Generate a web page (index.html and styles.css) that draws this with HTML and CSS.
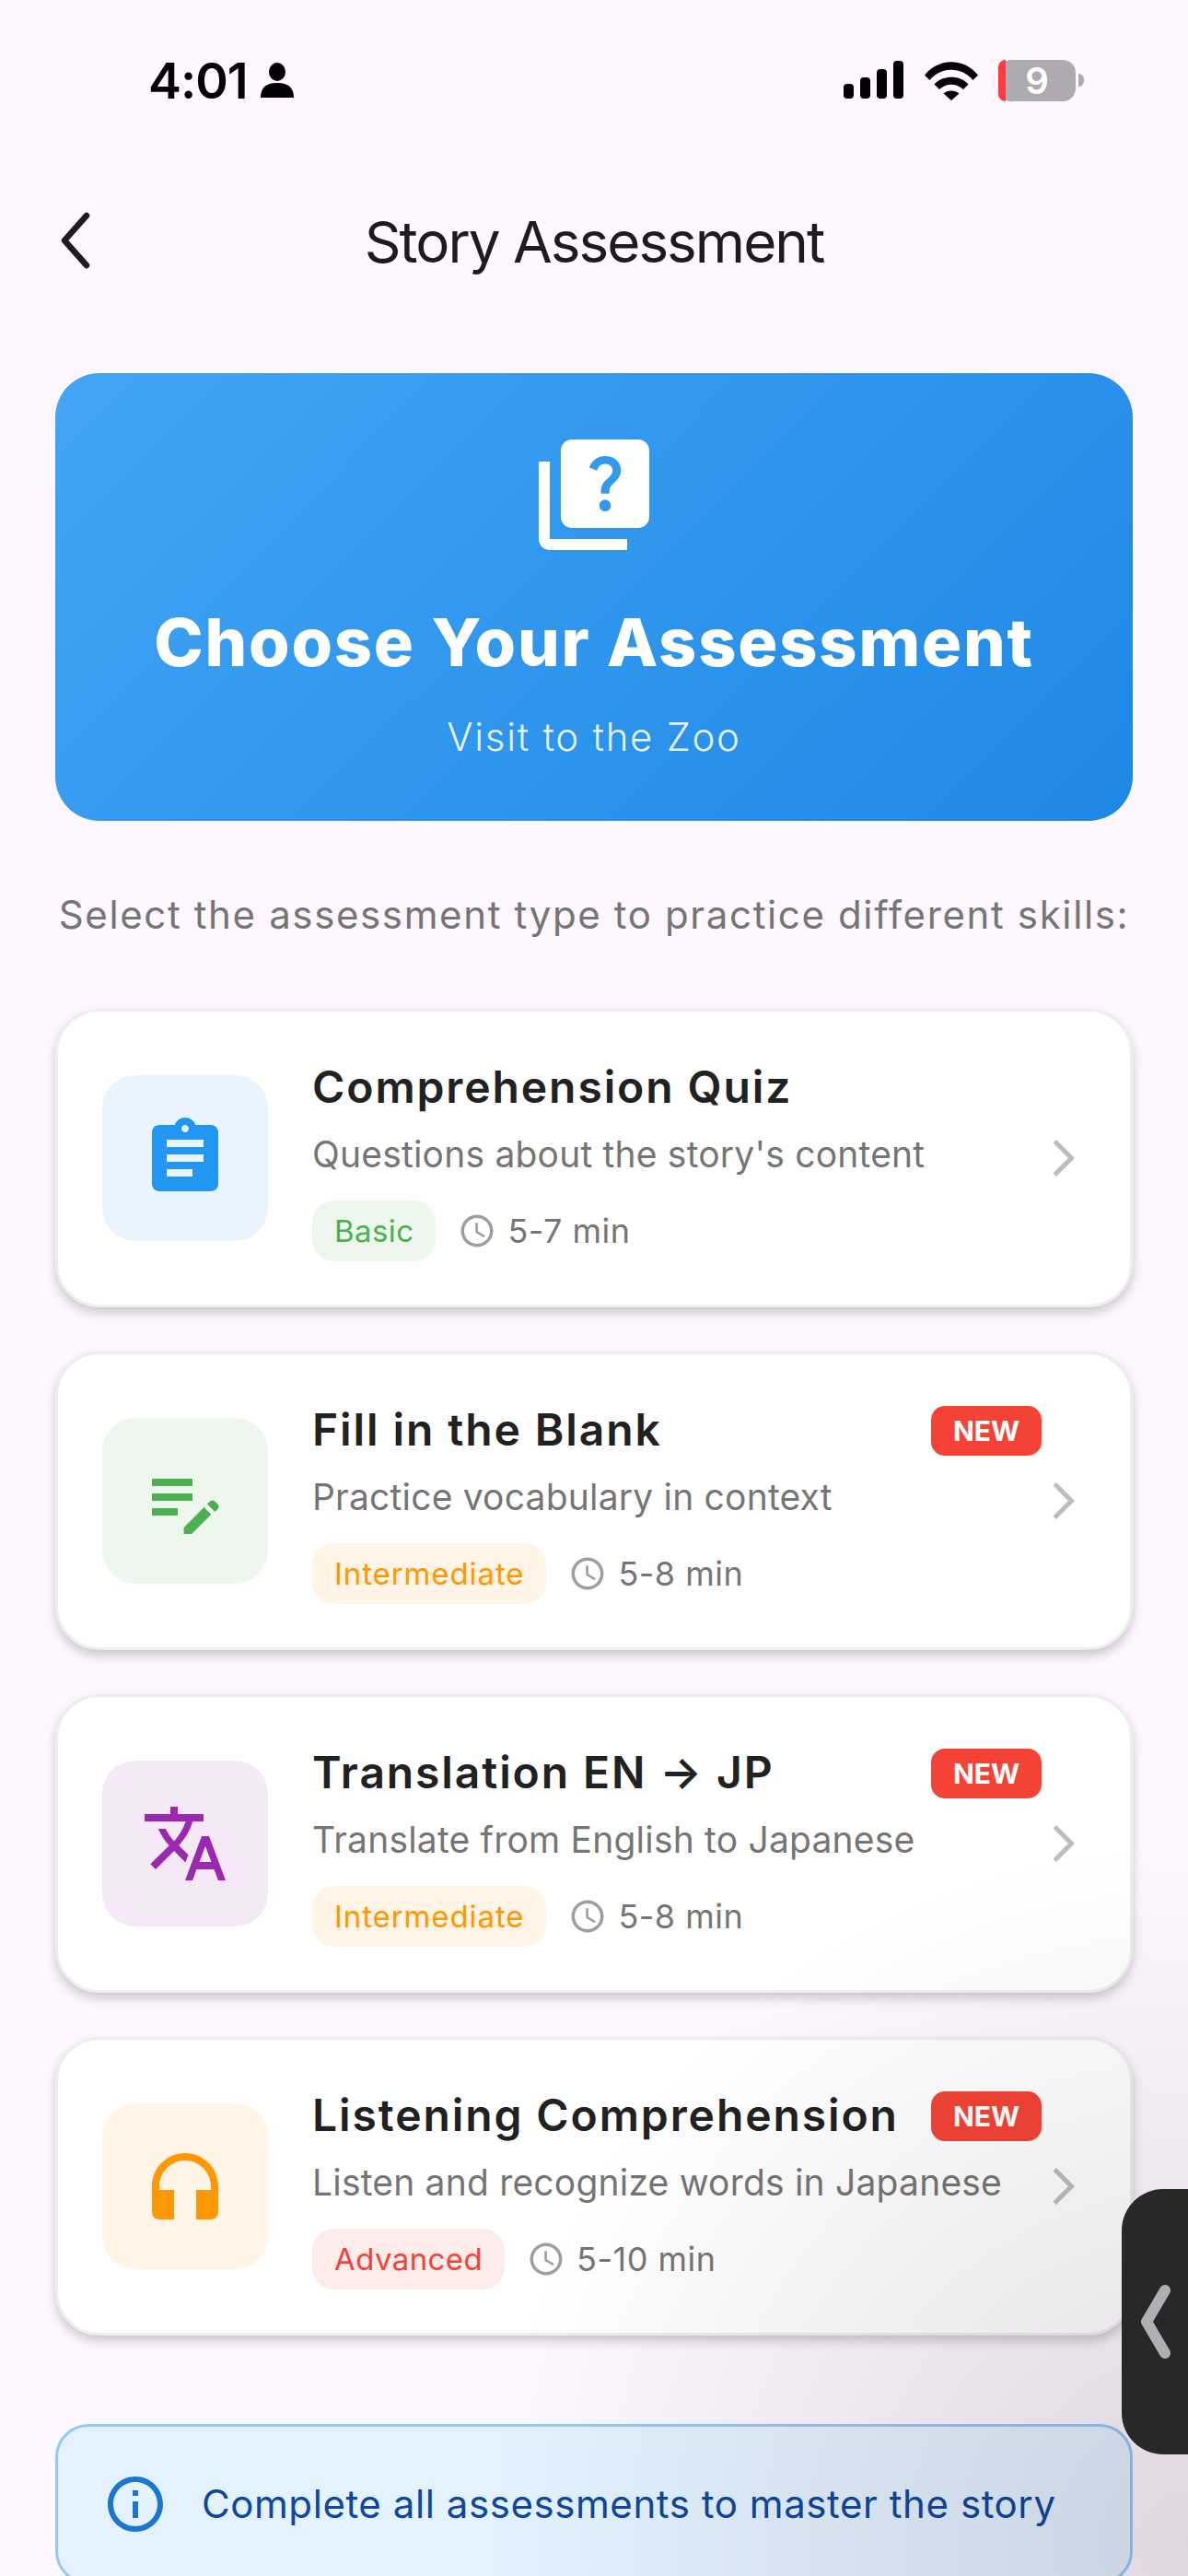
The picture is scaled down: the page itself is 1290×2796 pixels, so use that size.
FILE: index.html
```html
<!DOCTYPE html>
<html lang="en">
<head>
  <meta charset="UTF-8">
  <title>Story Assessment</title>
  <link rel="stylesheet" href="styles.css">
</head>
<body>

  <div class="status-bar">
    <span class="time">4:01</span>
    <svg class="person" width="36" height="38" viewBox="0 0 36 38">
      <ellipse cx="18" cy="10" rx="9" ry="10" fill="#000"/>
      <path d="M0 38c0-12 7-16 18-16s18 4 18 16z" fill="#000"/>
    </svg>
    <svg class="signal" width="66" height="42" viewBox="0 0 66 42">
      <rect x="0" y="25" width="11" height="16" rx="4"/>
      <rect x="18" y="18" width="11" height="23" rx="4"/>
      <rect x="36" y="9" width="11" height="32" rx="4"/>
      <rect x="54" y="0" width="11" height="41" rx="4"/>
    </svg>
    <svg class="wifi" width="58" height="43" viewBox="0 0 58 43">
      <path d="M0 15.500C15.500 -3.500 42.500 -3.500 58 15.500L52.500 21C40 6 18 6 5.500 21z"/>
      <path d="M10.500 25.500C19 15 39 15 47.500 25.500L42 31C34 24 24 24 16 31z"/>
      <path d="M20.500 35.500C25 31.500 33 31.500 37.500 35.500L29 43z"/>
    </svg>
    <div class="battery">
      <div class="battery-body">
        <div class="battery-low"></div>
        <span class="battery-num">9</span>
      </div>
      <div class="battery-nub"></div>
    </div>
  </div>

  <div class="top-nav">
    <svg class="back" width="40" height="66" viewBox="0 0 40 66">
      <path d="M31 5 7 32l24 27" fill="none" stroke="#1d1b20" stroke-width="6.500" stroke-linecap="round" stroke-linejoin="round"/>
    </svg>
    <h1 class="nav-title">Story Assessment</h1>
  </div>

  <div class="content">
    <div class="hero">
      <svg class="hero-icon" width="144" height="144" viewBox="0 0 24 24">
        <path fill="#fff" d="M4,6H2v14c0,1.1,0.9,2,2,2h14v-2H4V6z M20,2H8C6.9,2,6,2.9,6,4v12c0,1.1,0.9,2,2,2h12c1.1,0,2-0.9,2-2V4C22,2.9,21.1,2,20,2z M14.01,15c-0.59,0-1.05-0.47-1.05-1.05c0-0.59,0.47-1.04,1.05-1.04c0.59,0,1.04,0.45,1.04,1.04C15.04,14.53,14.6,15,14.01,15z M16.51,8.83c-0.63,0.93-1.23,1.21-1.55,1.8c-0.13,0.24-0.18,0.39-0.18,1.16h-1.52c0-0.41-0.06-1.07,0.26-1.64c0.41-0.73,1.18-1.16,1.63-1.8c0.48-0.68,0.21-1.94-1.14-1.94c-0.88,0-1.32,0.67-1.5,1.23l-1.37-0.57C11.51,5.96,12.52,5,13.99,5c1.23,0,2.08,0.56,2.51,1.26C16.87,6.87,17.08,7.99,16.51,8.83z"/>
      </svg>
      <h2 class="hero-title">Choose Your Assessment</h2>
      <p class="hero-sub">Visit to the Zoo</p>
    </div>

    <p class="lead">Select the assessment type to practice different skills:</p>

    <div class="cards">

      <div class="card">
        <div class="tile tile-blue">
          <svg width="96" height="96" viewBox="0 0 24 24"><path fill="#2196f3" d="M19 3h-4.180C14.400 1.840 13.300 1 12 1c-1.300 0-2.400.84-2.820 2H5c-1.100 0-2 .9-2 2v14c0 1.100.9 2 2 2h14c1.100 0 2-.9 2-2V5c0-1.100-.9-2-2-2zm-7 0c.55 0 1 .45 1 1s-.45 1-1 1-1-.45-1-1 .45-1 1-1zm2 14H7v-2h7v2zm3-4H7v-2h10v2zm0-4H7V7h10v2z"/></svg>
        </div>
        <div class="card-body">
          <div class="card-head">
            <h3 class="card-title">Comprehension Quiz</h3>
          </div>
          <p class="card-desc">Questions about the story's content</p>
          <div class="card-meta">
            <span class="chip chip-basic">Basic</span>
            <svg class="clock" width="42" height="42" viewBox="0 0 24 24"><path d="M11.990 2C6.470 2 2 6.480 2 12s4.470 10 9.990 10C17.520 22 22 17.520 22 12S17.520 2 11.990 2zM12 20c-4.420 0-8-3.580-8-8s3.580-8 8-8 8 3.580 8 8-3.580 8-8 8zm.5-13H11v6l5.250 3.150.75-1.230-4.500-2.670z"/></svg>
            <span class="duration">5-7 min</span>
          </div>
        </div>
        <svg class="chevron" width="48" height="48" viewBox="0 0 24 24"><path d="M6.230 20.230 8 22l10-10L8 2 6.230 3.770 14.460 12z"/></svg>
      </div>

      <div class="card">
        <div class="tile tile-green">
          <svg width="96" height="96" viewBox="0 0 24 24"><path fill="#4caf50" d="M3 10h11v2H3v-2zm0-2h11V6H3v2zm0 8h7v-2H3v2zm15.010-3.130.71-.71c.39-.39 1.020-.39 1.410 0l.71.71c.39.39.39 1.020 0 1.410l-.71.71-2.120-2.120zm-1.060 1.060-5.300 5.300V21h2.120l5.300-5.300-2.120-2.120z"/></svg>
        </div>
        <div class="card-body">
          <div class="card-head">
            <h3 class="card-title">Fill in the Blank</h3>
            <span class="new-badge">NEW</span>
          </div>
          <p class="card-desc">Practice vocabulary in context</p>
          <div class="card-meta">
            <span class="chip chip-mid">Intermediate</span>
            <svg class="clock" width="42" height="42" viewBox="0 0 24 24"><path d="M11.990 2C6.470 2 2 6.480 2 12s4.470 10 9.990 10C17.520 22 22 17.520 22 12S17.520 2 11.990 2zM12 20c-4.420 0-8-3.580-8-8s3.580-8 8-8 8 3.580 8 8-3.580 8-8 8zm.5-13H11v6l5.250 3.150.75-1.230-4.500-2.670z"/></svg>
            <span class="duration">5-8 min</span>
          </div>
        </div>
        <svg class="chevron" width="48" height="48" viewBox="0 0 24 24"><path d="M6.230 20.230 8 22l10-10L8 2 6.230 3.770 14.460 12z"/></svg>
      </div>

      <div class="card">
        <div class="tile tile-purple">
          <svg width="96" height="96" viewBox="0 0 24 24"><path fill="#9c27b0" d="M12.870 15.070l-2.540-2.510.03-.03c1.740-1.940 2.980-4.170 3.710-6.530H17V4h-7V2H8v2H1v1.990h11.170C11.500 7.920 10.440 9.750 9 11.350 8.070 10.320 7.300 9.190 6.690 8h-2c.73 1.630 1.730 3.170 2.980 4.560l-5.090 5.020L4 19l5-5 3.110 3.110.76-2.040zM18.500 10h-2L12 22h2l1.120-3h4.750L21 22h2l-4.500-12zm-2.620 7l1.620-4.330L19.120 17h-3.240z"/></svg>
        </div>
        <div class="card-body">
          <div class="card-head">
            <h3 class="card-title">Translation EN → JP</h3>
            <span class="new-badge">NEW</span>
          </div>
          <p class="card-desc">Translate from English to Japanese</p>
          <div class="card-meta">
            <span class="chip chip-mid">Intermediate</span>
            <svg class="clock" width="42" height="42" viewBox="0 0 24 24"><path d="M11.990 2C6.470 2 2 6.480 2 12s4.470 10 9.990 10C17.520 22 22 17.520 22 12S17.520 2 11.990 2zM12 20c-4.420 0-8-3.580-8-8s3.580-8 8-8 8 3.580 8 8-3.580 8-8 8zm.5-13H11v6l5.250 3.150.75-1.230-4.500-2.670z"/></svg>
            <span class="duration">5-8 min</span>
          </div>
        </div>
        <svg class="chevron" width="48" height="48" viewBox="0 0 24 24"><path d="M6.230 20.230 8 22l10-10L8 2 6.230 3.770 14.460 12z"/></svg>
      </div>

      <div class="card">
        <div class="tile tile-orange">
          <svg width="96" height="96" viewBox="0 0 24 24"><path fill="#ff9800" d="M12 3c-4.970 0-9 4.030-9 9v7c0 1.100.9 2 2 2h4v-8H5v-1c0-3.870 3.130-7 7-7s7 3.130 7 7v1h-4v8h4c1.100 0 2-.9 2-2v-7c0-4.970-4.030-9-9-9z"/></svg>
        </div>
        <div class="card-body">
          <div class="card-head">
            <h3 class="card-title">Listening Comprehension</h3>
            <span class="new-badge">NEW</span>
          </div>
          <p class="card-desc">Listen and recognize words in Japanese</p>
          <div class="card-meta">
            <span class="chip chip-hard">Advanced</span>
            <svg class="clock" width="42" height="42" viewBox="0 0 24 24"><path d="M11.990 2C6.470 2 2 6.480 2 12s4.470 10 9.990 10C17.520 22 22 17.520 22 12S17.520 2 11.990 2zM12 20c-4.420 0-8-3.580-8-8s3.580-8 8-8 8 3.580 8 8-3.580 8-8 8zm.5-13H11v6l5.250 3.150.75-1.230-4.500-2.670z"/></svg>
            <span class="duration">5-10 min</span>
          </div>
        </div>
        <svg class="chevron" width="48" height="48" viewBox="0 0 24 24"><path d="M6.230 20.230 8 22l10-10L8 2 6.230 3.770 14.460 12z"/></svg>
      </div>

    </div>

    <div class="info-box">
      <svg width="72" height="72" viewBox="0 0 24 24"><path fill="#1976d2" d="M11 7h2v2h-2zm0 4h2v6h-2zm1-9C6.480 2 2 6.480 2 12s4.480 10 10 10 10-4.480 10-10S17.520 2 12 2zm0 18c-4.410 0-8-3.590-8-8s3.590-8 8-8 8 3.590 8 8-3.590 8-8 8z"/></svg>
      <span class="info-text">Complete all assessments to master the story</span>
    </div>
  </div>

  <div class="side-glow"></div>
  <div class="side-handle">
    <svg width="36" height="80" viewBox="0 0 36 80">
      <path d="M29 6 9 40l20 34" fill="none" stroke="#b0afb4" stroke-width="12" stroke-linecap="round" stroke-linejoin="round"/>
    </svg>
  </div>

</body>
</html>
```

FILE: styles.css
```css
* {
  box-sizing: border-box;
}

html, body {
  margin: 0;
  padding: 0;
}

body {
  position: relative;
  width: 1290px;
  height: 2796px;
  overflow: hidden;
  background-color: #fef7ff;
  font-family: Inter, "Liberation Sans", sans-serif;
}

h1, h2, h3, p {
  margin: 0;
  font-weight: normal;
}

/* status bar */
.status-bar {
  display: flex;
  align-items: center;
  height: 178px;
  padding: 0 113px 4px 161px;
}

.time {
  font-size: 54px;
  font-weight: 600;
  letter-spacing: -1px;
  color: #000;
}

.person {
  margin-left: 14px;
}

.signal {
  margin-left: auto;
}

.wifi {
  margin-left: 22px;
}

.battery {
  display: flex;
  align-items: center;
  margin-left: 22px;
}

.battery-body {
  position: relative;
  display: flex;
  justify-content: center;
  align-items: center;
  width: 84px;
  height: 45px;
  border-radius: 14px;
  background-color: #aeabb0;
}

.battery-low {
  position: absolute;
  left: 0;
  top: 0;
  bottom: 0;
  width: 8px;
  border-radius: 14px 0 0 14px / 14px 0 0 14px;
  background-color: #ff3b3f;
}

.battery-num {
  font-size: 40px;
  line-height: 45px;
  font-weight: 600;
  color: #fff;
}

.battery-nub {
  width: 6px;
  height: 14px;
  margin-left: 3px;
  border-radius: 0 7px 7px 0;
  background-color: #aeabb0;
}

/* app bar */
.top-nav {
  position: relative;
  display: flex;
  justify-content: center;
  align-items: center;
  height: 168px;
}

.back {
  position: absolute;
  left: 63px;
  top: 51px;
}

.nav-title {
  font-size: 62px;
  letter-spacing: -2px;
  color: #1d1b20;
}

.content {
  padding: 59px 60px 0;
}

/* header card */
.hero {
  display: flex;
  flex-direction: column;
  align-items: center;
  height: 486px;
  padding-top: 60px;
  border-radius: 48px;
  background: linear-gradient(135deg, #42a5f5, #1e88e5);
}

.hero-icon {
  display: block;
}

.hero-title {
  margin-top: 34px;
  font-size: 72px;
  line-height: 108px;
  font-weight: 800;
  letter-spacing: 1.800px;
  color: #fff;
}

.hero-sub {
  margin-top: 13px;
  font-size: 42px;
  line-height: 72px;
  font-weight: 300;
  letter-spacing: 1.700px;
  color: rgba(255, 255, 255, 0.9);
}

.lead {
  margin: 66px 0 66px;
  font-size: 42px;
  line-height: 72px;
  letter-spacing: 1.630px;
  text-align: center;
  color: #757575;
}

/* assessment cards */
.cards {
  display: flex;
  flex-direction: column;
  gap: 48px;
}

.card {
  display: flex;
  align-items: center;
  gap: 48px;
  height: 324px;
  padding: 0 48px;
  border: 3px solid #eeeeee;
  border-radius: 48px;
  background-color: #fff;
  box-shadow: 0 6px 12px rgba(0, 0, 0, 0.2);
}

.tile {
  display: flex;
  justify-content: center;
  align-items: center;
  flex: none;
  width: 180px;
  height: 180px;
  border-radius: 36px;
}

.tile-blue { background-color: #e9f4fe; }
.tile-green { background-color: #edf7ee; }
.tile-purple { background-color: #f5e9f7; }
.tile-orange { background-color: #fff4e5; }

.card-body {
  flex: 1;
  min-width: 0;
}

.card-head {
  display: flex;
  justify-content: space-between;
  align-items: center;
  height: 72px;
}

.card-title {
  position: relative;
  top: -2px;
  font-size: 48px;
  font-weight: 600;
  letter-spacing: 1.900px;
  color: #212121;
  white-space: nowrap;
}

.new-badge {
  width: 120px;
  height: 54px;
  border-radius: 15px;
  background-color: #f44336;
  color: #fff;
  font-size: 30px;
  font-weight: 700;
  line-height: 54px;
  text-align: center;
}

.card-desc {
  margin-top: 4px;
  font-size: 39px;
  line-height: 63px;
  letter-spacing: 0.200px;
  color: #757575;
  white-space: nowrap;
}

.card-meta {
  display: flex;
  align-items: center;
  margin-top: 19px;
}

.chip {
  height: 66px;
  padding: 0 24px;
  border-radius: 24px;
  font-size: 33px;
  line-height: 66px;
  letter-spacing: 0.400px;
}

.chip-basic { background-color: #edf7ee; color: #4caf50; }
.chip-mid { background-color: #fff4e5; color: #ff9800; letter-spacing: 0.900px; }
.chip-hard { background-color: #feeceb; color: #f44336; }

.clock {
  margin-left: 24px;
  fill: #9e9e9e;
}

.duration {
  margin-left: 12px;
  font-size: 36px;
  letter-spacing: 0.500px;
  color: #757575;
}

.chevron {
  flex: none;
  margin-left: -48px;
  fill: #bdbdbd;
}

/* info box */
.info-box {
  display: flex;
  align-items: center;
  gap: 36px;
  margin-top: 96px;
  padding: 48px;
  border: 3px solid #90caf9;
  border-radius: 36px;
  background-color: #e3f2fd;
}

.info-text {
  position: relative;
  top: -1px;
  font-size: 42px;
  letter-spacing: 0.570px;
  color: #0d47a1;
}

/* assistive overlay at the screen edge */
.side-glow {
  position: absolute;
  left: 0;
  top: 0;
  width: 100%;
  height: 100%;
  background: radial-gradient(circle 760px at 1290px 2760px, rgba(20, 0, 20, 0.13), rgba(20, 0, 20, 0));
  pointer-events: none;
}

.side-handle {
  position: absolute;
  left: 1218px;
  top: 2376px;
  display: flex;
  align-items: center;
  width: 72px;
  height: 288px;
  padding-left: 18px;
  border-radius: 45px 0 0 45px;
  background-color: #282828;
}
```
